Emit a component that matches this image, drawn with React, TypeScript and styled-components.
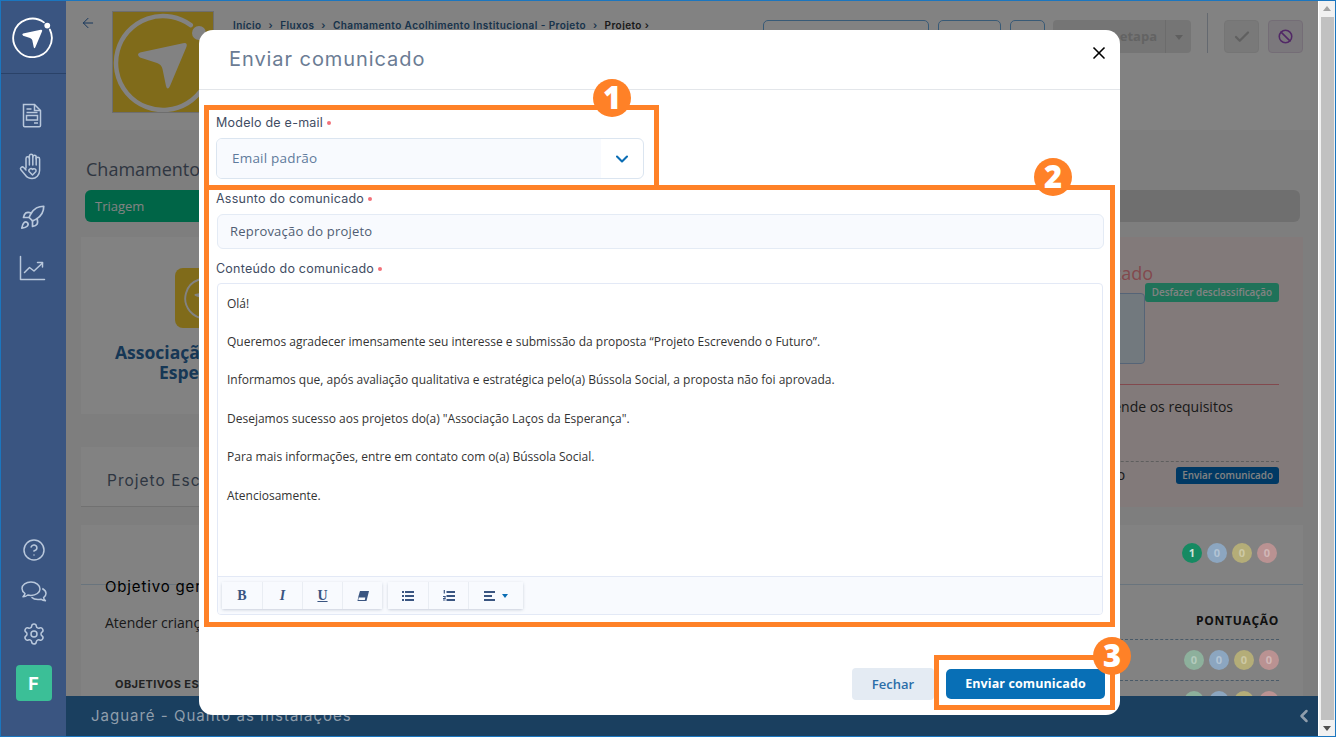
import React from "react";
import styled, { createGlobalStyle } from "styled-components";
import { CircleHelp, Settings, Rocket, Check, Ban, ChevronLeft, ChevronDown, ArrowLeft, X } from "lucide-react";

const Global = createGlobalStyle`
  html, body { margin: 0; padding: 0; height: 100%; overflow: hidden; }
  body { font-family: "Open Sans", "Liberation Sans", sans-serif; }
  * { box-sizing: border-box; }
`;

const titleFont = `Inter, "Open Sans", sans-serif`;

const Frame = styled.div`
  position: relative;
  display: flex;
  width: 1336px;
  height: 737px;
  border: 1px solid #1b76bf;
  overflow: hidden;
  background: #fcfcfc;
`;

const Sidebar = styled.nav`
  position: relative;
  z-index: 11;
  flex: 0 0 65px;
  display: flex;
  flex-direction: column;
  align-items: center;
  background: #3a5581;
  color: #b9c8dc;
`;
const SideLogo = styled.div`
  width: 100%;
  height: 73px;
  display: flex;
  align-items: center;
  justify-content: center;
  padding-right: 3px;
  border-bottom: 1px solid #2a4268;
  color: #fff;
`;
const SideTop = styled.div`
  display: flex;
  flex-direction: column;
  align-items: center;
  gap: 21px;
  margin-top: 26px;
  padding-right: 3px;
`;
const SideBottom = styled.div`
  margin-top: auto;
  display: flex;
  flex-direction: column;
  align-items: center;
  gap: 12px;
  margin-bottom: 35px;
`;
const SideIcon = styled.div`
  width: 30px;
  height: 30px;
  display: flex;
  align-items: center;
  justify-content: center;
`;
const UserTile = styled.div`
  width: 36px;
  height: 36px;
  margin-top: 4px;
  border-radius: 4px;
  background: #3bbf97;
  color: #fff;
  font: 700 18px ${titleFont};
  display: flex;
  align-items: center;
  justify-content: center;
`;

const Main = styled.main`
  position: relative;
  flex: 1;
  min-width: 0;
  display: flex;
  flex-direction: column;
  overflow: hidden;
`;

const Header = styled.header`
  flex: 0 0 129px;
  display: flex;
  align-items: flex-start;
  padding: 11px 15px 0 14px;
  background: #fff;
  box-shadow: 0 1px 6px rgba(0, 0, 0, 0.12);
`;
const BackLink = styled.div`
  color: #2f6db5;
  width: 33px;
  padding-top: 2px;
`;
const LogoTile = styled.div`
  flex: 0 0 100px;
  height: 100px;
  background: #fbd233;
  color: #fff;
  outline: 1px solid #d8d8d8;
`;
const Crumbs = styled.div`
  flex: 1;
  display: flex;
  gap: 7px;
  margin: 7px 0 0 20px;
  font: 600 10px/12px ${titleFont};
  letter-spacing: 0.42px;
  color: #2f6493;
  white-space: nowrap;
`;
const CrumbEnd = styled.span`
  color: #333;
`;
const HeadActions = styled.div`
  display: flex;
  align-items: flex-start;
  gap: 9px;
`;
const GhostBtn = styled.div<{ $w: number }>`
  width: ${(p) => p.$w}px;
  height: 33px;
  margin-top: 8px;
  border: 1px solid #6fb0e8;
  border-radius: 5px;
`;
const StepSelect = styled.div`
  width: 138px;
  height: 33px;
  margin-top: 8px;
  margin-left: -1px;
  display: flex;
  border-radius: 4px;
  background: #e6e6e6;
  color: #c2c2c2;
  font: 700 13px/33px "Open Sans", sans-serif;
`;
const StepLabel = styled.div`
  flex: 1;
  text-align: right;
  padding-right: 8px;
  border-right: 1px solid #d4d4d4;
`;
const StepCaret = styled.div`
  width: 25px;
  display: flex;
  align-items: center;
  justify-content: center;
  &::after {
    content: "";
    border: 4px solid transparent;
    border-top: 5px solid #bbb;
    margin-top: 5px;
  }
`;
const HeadRule = styled.div`
  width: 1px;
  height: 40px;
  margin: 1px 7px 0 7px;
  background: #c4cfdc;
`;
const SquareBtn = styled.div<{ $tone: "plain" | "ban" }>`
  width: 35px;
  height: 33px;
  margin-top: 8px;
  border-radius: 4px;
  display: flex;
  align-items: center;
  justify-content: center;
  background: ${(p) => (p.$tone === "ban" ? "#f2ebf4" : "#ededed")};
  color: ${(p) => (p.$tone === "ban" ? "#a050c8" : "#bdbdbd")};
  border: 1px solid ${(p) => (p.$tone === "ban" ? "#e4d6e8" : "#e6e6e6")};
`;

const Content = styled.div`
  flex: 1;
  padding: 26px 15px 0;
  background: #f7f7f7;
  min-height: 0;
`;
const PageTitle = styled.h1`
  margin: 0 0 9px 5px;
  font: 400 18px/26px "Open Sans", sans-serif;
  color: #5c6b80;
  height: 25px;
`;
const StageBar = styled.div`
  height: 32px;
  margin: 0 3px 15px 4px;
  display: flex;
  border-radius: 6px;
  background: #dadada;
  overflow: hidden;
`;
const StageDone = styled.div`
  width: 300px;
  padding-left: 10px;
  background: #00c78c;
  color: #fff;
  font: 400 13px/32px "Open Sans", sans-serif;
`;
const TopRow = styled.div`
  display: grid;
  grid-template-columns: 620px 1fr;
  gap: 20px;
  height: 266px;
  margin-bottom: 22px;
`;
const LeftColumn = styled.div`
  display: flex;
  flex-direction: column;
  height: 270px;
`;
const OrgCard = styled.section`
  flex: 0 0 177px;
  padding-top: 31px;
  background: #fff;
`;
const OrgWrap = styled.div`
  width: 240px;
  margin-left: 19px;
`;
const OrgLogo = styled.div`
  width: 60px;
  height: 60px;
  margin: 0 0 14px 75px;
  padding: 9px;
  border-radius: 8px;
  background: #fbd233;
  color: #fff;
`;
const OrgName = styled.div<{ $indent: number }>`
  padding-left: ${(p) => p.$indent}px;
  font: 700 17.5px/20px "Open Sans", sans-serif;
  color: #2b6ca8;
`;
const ProjectHead = styled.div`
  margin-top: 33px;
  flex: 1;
  padding: 24px 0 0 26px;
  background: #fff;
  border-bottom: 1px solid #dedede;
  font: 400 15.5px/20px ${titleFont};
  letter-spacing: 1px;
  color: #5a6a80;
`;
const PinkCard = styled.section`
  position: relative;
  background: #fff0ef;
  display: flex;
  flex-direction: column;
  padding: 0 24px;
`;
const PinkTitle = styled.div`
  align-self: flex-end;
  margin: 24px 126px 0 0;
  font: 400 18px/24px "Open Sans", sans-serif;
  color: #ff9099;
`;
const PinkMiddle = styled.div`
  display: flex;
  justify-content: flex-end;
  align-items: flex-start;
  height: 102px;
  margin-top: -2px;
  border-bottom: 1px solid #ff9099;
`;
const PinkBox = styled.div`
  width: 200px;
  height: 71px;
  margin-top: 10px;
  border: 1px solid #a8c4ea;
  border-radius: 4px;
  background: #e0eef8;
`;
const MiniBtn = styled.div<{ $tone: "green" | "navy" }>`
  padding: 0 ${(p) => (p.$tone === "green" ? 7 : 6)}px;
  border-radius: 3px;
  color: #fff;
  white-space: nowrap;
  font: 600 9.9px/${(p) => (p.$tone === "green" ? 19 : 17)}px "Open Sans", sans-serif;
  background: ${(p) => (p.$tone === "green" ? "#3ee0ae" : "#0070c4")};
`;
const PinkReason = styled.div`
  align-self: flex-end;
  margin: 11px 46px 0 0;
  font: 400 14px/22px "Open Sans", sans-serif;
  color: #333;
  white-space: nowrap;
`;
const PinkFooter = styled.div`
  display: flex;
  align-items: center;
  justify-content: flex-end;
  margin-top: 43px;
  padding-top: 4px;
  border-top: 1px dashed #b8b8b8;
  gap: 51px;
  font: 400 14px/18px "Open Sans", sans-serif;
  color: #333;
`;
const Panel = styled.section`
  background: #fff;
  height: 300px;
`;
const PanelTop = styled.div`
  height: 60px;
  display: flex;
  justify-content: flex-end;
  align-items: center;
  padding: 0 26px 4px 0;
  border-bottom: 1px solid #cfe3f5;
`;
const Dots = styled.div`
  display: flex;
  gap: 5px;
`;
const Dot = styled.div<{ $c: string; $strong?: boolean }>`
  position: relative;
  z-index: 11;
  width: 20px;
  height: 20px;
  border-radius: 50%;
  background: ${(p) => p.$c};
  color: ${(p) => (p.$strong ? "#cfe4da" : "rgba(255, 255, 255, 0.35)")};
  text-align: center;
  font: 700 11px/20px "Open Sans", sans-serif;
`;
const PanelBody = styled.div`
  display: flex;
  justify-content: space-between;
  padding: 0 24px;
`;
const ObjColumn = styled.div`
  white-space: nowrap;
`;
const ObjTitle = styled.div`
  margin-top: -8px;
  font: 400 15px/20px ${titleFont};
  letter-spacing: 0.85px;
  color: #000;
`;
const ObjText = styled.div`
  margin-top: 16px;
  font: 400 14px/20px "Open Sans", sans-serif;
  color: #333;
`;
const ObjSub = styled.div`
  margin: 44px 0 0 10px;
  font: 700 11px/14px ${titleFont};
  letter-spacing: 0.4px;
  color: #444;
`;
const ScoreColumn = styled.div`
  width: 300px;
  margin-top: 26px;
`;
const ScoreHead = styled.div`
  text-align: right;
  font: 700 12px/20px "Open Sans", sans-serif;
  letter-spacing: 0.7px;
  color: #222;
  height: 28px;
  white-space: nowrap;
`;
const ScoreRow = styled.div`
  height: 41px;
  border-top: 1px dashed #8fb0cc;
  display: flex;
  justify-content: flex-end;
  align-items: center;
`;

const BottomBar = styled.div`
  position: absolute;
  z-index: 11;
  left: 0;
  right: 0;
  bottom: 0;
  height: 40px;
  display: flex;
  align-items: center;
  justify-content: space-between;
  padding: 0 4px 0 25px;
  background: #1a3f5f;
  color: #909eac;
  font: 400 15px/20px ${titleFont};
  letter-spacing: 1px;
`;

const FakeScroll = styled.div`
  position: relative;
  z-index: 11;
  flex: 0 0 17px;
  display: flex;
  flex-direction: column;
  align-items: center;
  background: #f1f1f1;
  border-left: 1px solid #fff;
`;
const ScrollArrow = styled.div<{ $down?: boolean }>`
  height: 16px;
  display: flex;
  align-items: center;
  justify-content: center;
  &::after {
    content: "";
    border: 4px solid transparent;
    ${(p) => (p.$down ? "border-top: 5px solid #505050; margin-top: 5px;" : "border-bottom: 5px solid #a3a3a3; margin-bottom: 5px;")}
  }
`;
const ScrollThumb = styled.div`
  width: 13px;
  flex: 1;
  background: #c1c1c1;
`;

const Overlay = styled.div`
  position: absolute;
  inset: 0;
  z-index: 10;
  background: rgba(0, 0, 0, 0.49);
`;

const Modal = styled.div`
  position: absolute;
  z-index: 12;
  left: 198px;
  top: 29px;
  width: 921px;
  height: 685px;
  display: flex;
  flex-direction: column;
  border-radius: 14px;
  background: #fff;
`;
const ModalHead = styled.div`
  flex: 0 0 60px;
  display: flex;
  align-items: center;
  justify-content: space-between;
  padding: 0 11px 0 30px;
  border-bottom: 1px solid #e3e6ea;
`;
const ModalTitle = styled.h2`
  margin: -2px 0 0;
  font: 400 20px/28px ${titleFont};
  letter-spacing: 0.93px;
  color: #6b7c94;
`;
const CloseBtn = styled.div`
  color: #000;
  display: flex;
  margin-top: -13px;
`;
const ModalBody = styled.div`
  flex: 1;
  padding: 25px 16px 0 17px;
  display: flex;
  flex-direction: column;
`;
const Label = styled.label<{ $gap: number }>`
  display: block;
  margin-bottom: ${(p) => p.$gap}px;
  font: 400 12.5px/16px ${titleFont};
  letter-spacing: 0.24px;
  color: #3f4d63;
  &::after {
    content: "";
    display: inline-block;
    width: 4px;
    height: 4px;
    margin-left: 4px;
    vertical-align: 2px;
    border-radius: 50%;
    background: #f2727a;
  }
`;
const SelectBox = styled.div`
  width: 428px;
  height: 41px;
  margin-bottom: 12px;
  display: flex;
  border: 1px solid #dbe5f0;
  border-radius: 6px;
  overflow: hidden;
  background: #fff;
`;
const SelectText = styled.div`
  flex: 1;
  padding-left: 15px;
  background: #f8fafe;
  font: 400 13.5px/39px "Open Sans", sans-serif;
  letter-spacing: 0.2px;
  color: #5f7a9c;
`;
const SelectArrow = styled.div`
  width: 42px;
  display: flex;
  align-items: center;
  justify-content: center;
  color: #0a6db4;
`;
const TextInput = styled.div`
  width: 887px;
  height: 35px;
  margin: 0 0 12px 1px;
  padding-left: 12px;
  border: 1px solid #e4ebf5;
  border-radius: 6px;
  background: #f8fafe;
  font: 400 13px/33px "Open Sans", sans-serif;
  letter-spacing: 0.2px;
  color: #4f5d73;
`;
const Editor = styled.div`
  width: 886px;
  height: 332px;
  margin-left: 1px;
  display: flex;
  flex-direction: column;
  border: 1px solid #e3e9f6;
  border-radius: 4px;
  overflow: hidden;
`;
const EditorText = styled.div`
  flex: 1;
  padding: 9.7px 9px;
  font: 400 12px/19.2px "Open Sans", sans-serif;
  color: #333;
  & p {
    margin: 0 0 19.2px;
  }
`;
const Toolbar = styled.div`
  flex: 0 0 38px;
  display: flex;
  gap: 6px;
  padding: 5px 4px;
  border-top: 1px solid #e3e9f6;
  background: #f8fafe;
`;
const ToolGroup = styled.div`
  display: flex;
  box-shadow: 0 1px 3px rgba(60, 80, 110, 0.25);
  border-radius: 2px;
`;
const ToolBtn = styled.div<{ $wide?: boolean }>`
  width: ${(p) => (p.$wide ? 55 : 40)}px;
  height: 27px;
  display: flex;
  align-items: center;
  justify-content: center;
  gap: 7px;
  background: #f8fafe;
  color: #3a5581;
  font: 700 14px/27px "Liberation Serif", serif;
  & + & {
    border-left: 1px solid #e9edf3;
  }
`;
const ToolCaret = styled.span`
  border: 3px solid transparent;
  border-top: 4px solid #0a6db4;
  margin-top: 4px;
`;
const ModalFooter = styled.div`
  flex: 0 0 47px;
  margin-bottom: 8px;
  display: flex;
  align-items: center;
  justify-content: flex-end;
  gap: 12px;
  padding-right: 15px;
`;
const BtnLight = styled.div`
  width: 82px;
  height: 32px;
  border-radius: 4px;
  background: #e4ebf3;
  color: #2b6ea8;
  text-align: center;
  font: 600 13px/32px "Open Sans", sans-serif;
`;
const BtnPrimary = styled.div`
  width: 159px;
  height: 30px;
  border-radius: 5px;
  background: #086fb6;
  color: #fff;
  text-align: center;
  font: 700 12.5px/30px "Open Sans", sans-serif;
  letter-spacing: 0.1px;
`;

const Callout = styled.div`
  position: absolute;
  border: 5px solid #ff8127;
  pointer-events: none;
`;
const ModelCallout = styled(Callout)`
  left: 5px;
  top: 75px;
  width: 455px;
  height: 85px;
`;
const SubjectCallout = styled(Callout)`
  left: 5px;
  top: 155px;
  width: 911px;
  height: 442px;
`;
const ActionCallout = styled(Callout)`
  left: 735px;
  top: 625px;
  width: 181px;
  height: 55px;
`;
const Badge = styled.div`
  position: absolute;
  width: 38px;
  height: 38px;
  border-radius: 50%;
  background: #ff8127;
  color: #fff;
  text-align: center;
  font: 800 31px/37px "Open Sans", sans-serif;
`;
const BadgeOne = styled(Badge)`
  left: 394px;
  top: 49px;
`;
const BadgeTwo = styled(Badge)`
  left: 835px;
  top: 128px;
`;
const BadgeThree = styled(Badge)`
  left: 894px;
  top: 607px;
`;

const LogoMark = ({ size }: { size: number }) => (
  <svg width={size} height={size} viewBox="0 0 100 100" fill="none">
    <path d="M77.8 13.1A47 47 0 1 0 92.3 30.5" stroke="currentColor" strokeWidth="4.500" strokeLinecap="round" />
    <circle cx="86" cy="21" r="7" fill="currentColor" />
    <path d="M27 40.500 70 31.300Q75 30.300 73.400 35L57 74Q54.500 79 53 74L49.500 57Q48.500 52.500 44 51L27 45.500Q23 42 27 40.500Z" fill="currentColor" />
  </svg>
);

const DocIcon = () => (
  <svg width="30" height="30" viewBox="0 0 30 30" fill="none" stroke="currentColor" strokeWidth="1.500">
    <path d="M6.500 4.500h11l6 6v15a1.200 1.200 0 0 1-1.200 1.200H7.700a1.200 1.200 0 0 1-1.200-1.200z" />
    <path d="M17.500 4.500v6h6" />
    <path d="M9.500 9h5M9.500 12.500h11M21 23h-4" />
    <rect x="9.500" y="15.500" width="11" height="4.500" />
  </svg>
);
const HandIcon = () => (
  <svg width="30" height="30" viewBox="0 0 30 30" fill="none" stroke="currentColor" strokeWidth="1.500" strokeLinecap="round" strokeLinejoin="round">
    <path d="M9 17V7.500a1.700 1.700 0 0 1 3.400 0V5a1.700 1.700 0 0 1 3.400 0v1a1.700 1.700 0 0 1 3.400 0v2a1.700 1.700 0 0 1 3.400 0V19.500c0 4.500-3.500 8-7.500 8-3 0-5.200-1.200-6.800-3.500L3.700 18.500c-1-1.800 1.500-3.500 3-2L9 19" />
    <path d="M12.400 7.500V14M15.800 5V14M19.200 6V14" />
    <path d="M15.500 24l-3.200-3.200a1.900 1.900 0 0 1 3.200-2.300 1.900 1.900 0 0 1 3.200 2.300z" />
  </svg>
);
const ChartIcon = () => (
  <svg width="30" height="30" viewBox="0 0 30 30" fill="none" stroke="currentColor" strokeWidth="1.500" strokeLinecap="round" strokeLinejoin="round">
    <path d="M3.500 3.500V26.500h24" />
    <path d="M7.500 19.500l5-5 4.500 3.500 8.500-8" />
    <path d="M20.500 9.500h5v4.500" />
  </svg>
);
const ChatIcon = () => (
  <svg width="28" height="26" viewBox="0 0 28 26" fill="none" stroke="currentColor" strokeWidth="1.500" strokeLinejoin="round">
    <path d="M11 3C6 3 2 5.800 2 9.500c0 2 1.200 3.700 3 5-.3 1.300-1 2.300-2 3.200 2 0 3.500-.7 4.800-1.700 1 .3 2.100.4 3.200.4 5 0 9-2.900 9-6.500S16 3 11 3z" />
    <path d="M22.300 9.500c2.200 1.200 3.700 3 3.700 5 0 1.600-.9 3-2.400 4.200.2 1.200.8 2.200 1.800 3-1.800 0-3.300-.6-4.500-1.500-1 .3-2 .4-3 .4-2.600 0-4.900-.9-6.400-2.300" />
  </svg>
);

const EraserIcon = () => (
  <svg width="12" height="10" viewBox="0 0 12 10" fill="currentColor">
    <path d="M3 0h9L9.500 10H0.500L1.500 5z" />
    <path d="M1.800 6.500h6.500L7.800 9H1.300z" fill="#f8fafe" />
  </svg>
);
const BulletIcon = () => (
  <svg width="12" height="10" viewBox="0 0 12 10" fill="currentColor">
    <rect x="0" y="0" width="2" height="2" /><rect x="3" y="0" width="9" height="2" />
    <rect x="0" y="4" width="2" height="2" /><rect x="3" y="4" width="9" height="2" />
    <rect x="0" y="8" width="2" height="2" /><rect x="3" y="8" width="9" height="2" />
  </svg>
);
const NumberIcon = () => (
  <svg width="12" height="11" viewBox="0 0 12 11" fill="currentColor">
    <rect x="3.500" y="1" width="8.500" height="2" /><rect x="3.500" y="5" width="8.500" height="2" /><rect x="3.500" y="9" width="8.500" height="2" />
    <rect x="0.700" y="0" width="1.200" height="3.500" /><rect x="0" y="6" width="2.500" height="1" /><rect x="0" y="8" width="2.500" height="1" /><rect x="1.500" y="6" width="1" height="3" /><rect x="0" y="9.500" width="2.500" height="1" />
  </svg>
);
const AlignIcon = () => (
  <svg width="11" height="10" viewBox="0 0 11 10" fill="currentColor">
    <rect x="0" y="0" width="11" height="2" /><rect x="0" y="4" width="8" height="2" /><rect x="0" y="8" width="11" height="2" />
  </svg>
);

const dotColors = ["#8db09c", "#8ca6c0", "#b4ad78", "#ba9292"];
const DotSet = ({ first }: { first?: boolean }) => (
  <Dots>
    {dotColors.map((c, i) => {
      const lead = first && i === 0;
      return (
        <Dot key={c} $c={lead ? "#168a62" : c} $strong={lead}>{lead ? "1" : "0"}</Dot>
      );
    })}
  </Dots>
);

const lines = [
  "Olá!",
  "Queremos agradecer imensamente seu interesse e submissão da proposta “Projeto Escrevendo o Futuro”.",
  "Informamos que, após avaliação qualitativa e estratégica pelo(a) Bússola Social, a proposta não foi aprovada.",
  "Desejamos sucesso aos projetos do(a) \"Associação Laços da Esperança\".",
  "Para mais informações, entre em contato com o(a) Bússola Social.",
  "Atenciosamente.",
];

export default function App() {
  return (
    <>
      <Global />
      <Frame>
        <Sidebar>
          <SideLogo><LogoMark size={41} /></SideLogo>
          <SideTop>
            <SideIcon><DocIcon /></SideIcon>
            <SideIcon><HandIcon /></SideIcon>
            <SideIcon><Rocket size={27} strokeWidth={1.5} /></SideIcon>
            <SideIcon><ChartIcon /></SideIcon>
          </SideTop>
          <SideBottom>
            <SideIcon><CircleHelp size={24} strokeWidth={1.5} /></SideIcon>
            <SideIcon><ChatIcon /></SideIcon>
            <SideIcon><Settings size={24} strokeWidth={1.5} /></SideIcon>
            <UserTile>F</UserTile>
          </SideBottom>
        </Sidebar>

        <Main>
          <Header>
            <BackLink><ArrowLeft size={16} strokeWidth={1.5} /></BackLink>
            <LogoTile><LogoMark size={100} /></LogoTile>
            <Crumbs>
              <span>Início</span><span>›</span><span>Fluxos</span><span>›</span>
              <span>Chamamento Acolhimento Institucional - Projeto</span><span>›</span>
              <CrumbEnd>Projeto ›</CrumbEnd>
            </Crumbs>
            <HeadActions>
              <GhostBtn $w={166} />
              <GhostBtn $w={63} />
              <GhostBtn $w={35} />
              <StepSelect>
                <StepLabel>Próxima etapa</StepLabel>
                <StepCaret />
              </StepSelect>
              <HeadRule />
              <SquareBtn $tone="plain"><Check size={18} strokeWidth={3} /></SquareBtn>
              <SquareBtn $tone="ban"><Ban size={15} strokeWidth={2.5} /></SquareBtn>
            </HeadActions>
          </Header>
          <Content>
            <PageTitle>Chamamento</PageTitle>
            <StageBar><StageDone>Triagem</StageDone></StageBar>
            <TopRow>
              <LeftColumn>
                <OrgCard>
                  <OrgWrap>
                    <OrgLogo><LogoMark size={42} /></OrgLogo>
                    <OrgName $indent={15}>Associação</OrgName>
                    <OrgName $indent={59}>Esperança</OrgName>
                  </OrgWrap>
                </OrgCard>
                <ProjectHead>Projeto Escrevendo</ProjectHead>
              </LeftColumn>
              <PinkCard>
                <PinkTitle>Projeto desclassificado</PinkTitle>
                <PinkMiddle>
                  <PinkBox />
                  <MiniBtn $tone="green">Desfazer desclassificação</MiniBtn>
                </PinkMiddle>
                <PinkReason>A proposta não atende os requisitos</PinkReason>
                <PinkFooter>
                  <span>Comunicado não enviado</span>
                  <MiniBtn $tone="navy">Enviar comunicado</MiniBtn>
                </PinkFooter>
              </PinkCard>
            </TopRow>
            <Panel>
              <PanelTop><DotSet first /></PanelTop>
              <PanelBody>
                <ObjColumn>
                  <ObjTitle>Objetivo geral</ObjTitle>
                  <ObjText>Atender crianças</ObjText>
                  <ObjSub>OBJETIVOS ESPECÍFICOS</ObjSub>
                </ObjColumn>
                <ScoreColumn>
                  <ScoreHead>PONTUAÇÃO</ScoreHead>
                  <ScoreRow><DotSet /></ScoreRow>
                  <ScoreRow><DotSet /></ScoreRow>
                </ScoreColumn>
              </PanelBody>
            </Panel>
          </Content>
          <BottomBar>
            <span>Jaguaré - Quanto às Instalações</span>
            <ChevronLeft size={20} strokeWidth={3} />
          </BottomBar>
        </Main>

        <FakeScroll>
          <ScrollArrow />
          <ScrollThumb />
          <ScrollArrow $down />
        </FakeScroll>

        <Overlay />

        <Modal>
          <ModalHead>
            <ModalTitle>Enviar comunicado</ModalTitle>
            <CloseBtn><X size={20} strokeWidth={2} /></CloseBtn>
          </ModalHead>
          <ModalBody>
            <Label $gap={7}>Modelo de e-mail</Label>
            <SelectBox>
              <SelectText>Email padrão</SelectText>
              <SelectArrow><ChevronDown size={20} strokeWidth={2.5} /></SelectArrow>
            </SelectBox>
            <Label $gap={7}>Assunto do comunicado</Label>
            <TextInput>Reprovação do projeto</TextInput>
            <Label $gap={6}>Conteúdo do comunicado</Label>
            <Editor>
              <EditorText>
                {lines.map((l) => <p key={l}>{l}</p>)}
              </EditorText>
              <Toolbar>
                <ToolGroup>
                  <ToolBtn>B</ToolBtn>
                  <ToolBtn><i>I</i></ToolBtn>
                  <ToolBtn><u>U</u></ToolBtn>
                  <ToolBtn><EraserIcon /></ToolBtn>
                </ToolGroup>
                <ToolGroup>
                  <ToolBtn><BulletIcon /></ToolBtn>
                  <ToolBtn><NumberIcon /></ToolBtn>
                  <ToolBtn $wide><AlignIcon /><ToolCaret /></ToolBtn>
                </ToolGroup>
              </Toolbar>
            </Editor>
          </ModalBody>
          <ModalFooter>
            <BtnLight>Fechar</BtnLight>
            <BtnPrimary>Enviar comunicado</BtnPrimary>
          </ModalFooter>
          <ModelCallout />
          <SubjectCallout />
          <ActionCallout />
          <BadgeOne>1</BadgeOne>
          <BadgeTwo>2</BadgeTwo>
          <BadgeThree>3</BadgeThree>
        </Modal>
      </Frame>
    </>
  );
}
